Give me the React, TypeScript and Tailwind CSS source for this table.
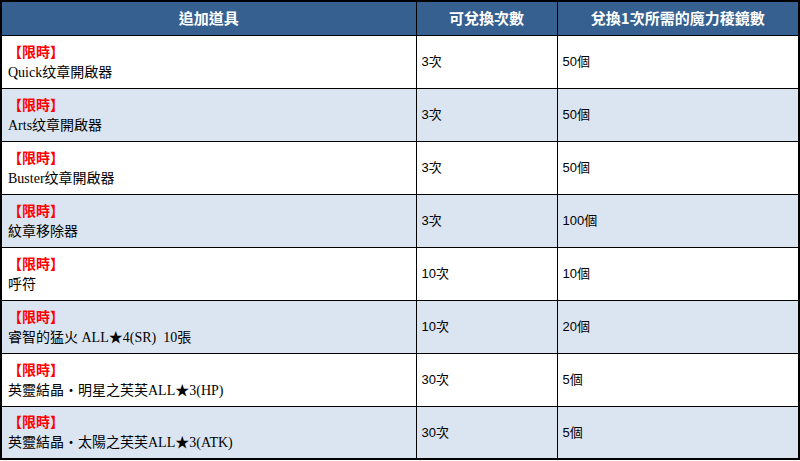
const rows = [
  { name: "Quick纹章開啟器", times: "3次", cost: "50個" },
  { name: "Arts纹章開啟器", times: "3次", cost: "50個" },
  { name: "Buster纹章開啟器", times: "3次", cost: "50個" },
  { name: "紋章移除器", times: "3次", cost: "100個" },
  { name: "呼符", times: "10次", cost: "10個" },
  { name: "睿智的猛火 ALL★4(SR)\u00a0 10張", times: "10次", cost: "20個" },
  { name: "英靈結晶・明星之芙芙ALL★3(HP)", times: "30次", cost: "5個" },
  { name: "英靈結晶・太陽之芙芙ALL★3(ATK)", times: "30次", cost: "5個" },
];

const serif = "font-['Liberation_Serif','Noto_Sans_CJK_TC',serif]";
const sans = "font-['Liberation_Sans','Noto_Sans_CJK_TC',sans-serif]";

export default function App() {
  return (
    <div className="bg-white">
      <table className="w-[798px] table-fixed border-collapse border-2 border-black text-black">
        <colgroup>
          <col className="w-[415px]" />
          <col className="w-[141px]" />
          <col className="w-[242px]" />
        </colgroup>
        <thead>
          <tr className="h-[34px] bg-[#36608f] text-[15px] font-bold text-white font-['Noto_Sans_CJK_TC',sans-serif]">
            <th className="border border-black p-0 text-center">追加道具</th>
            <th className="border border-black p-0 text-center">可兌換次數</th>
            <th className="border border-black p-0 text-center">兌換1次所需的魔力稜鏡數</th>
          </tr>
        </thead>
        <tbody>
          {rows.map((row, i) => (
            <tr
              key={i}
              className={i % 2 === 1 ? "h-[53px] bg-[#dbe5f1]" : "h-[53px] bg-white"}
            >
              <td className={`border border-black py-0 pl-[6px] align-middle text-[14px] leading-[21px] ${serif}`}>
                <div className="font-bold text-[#ff0000] font-['Noto_Sans_CJK_TC',sans-serif]">【限時】</div>
                <div>{row.name}</div>
              </td>
              <td className={`border border-black py-0 pl-[5px] align-middle text-[13px] ${sans}`}>
                {row.times}
              </td>
              <td className={`border border-black py-0 pl-[5px] align-middle text-[13px] ${sans}`}>
                {row.cost}
              </td>
            </tr>
          ))}
        </tbody>
      </table>
    </div>
  );
}
